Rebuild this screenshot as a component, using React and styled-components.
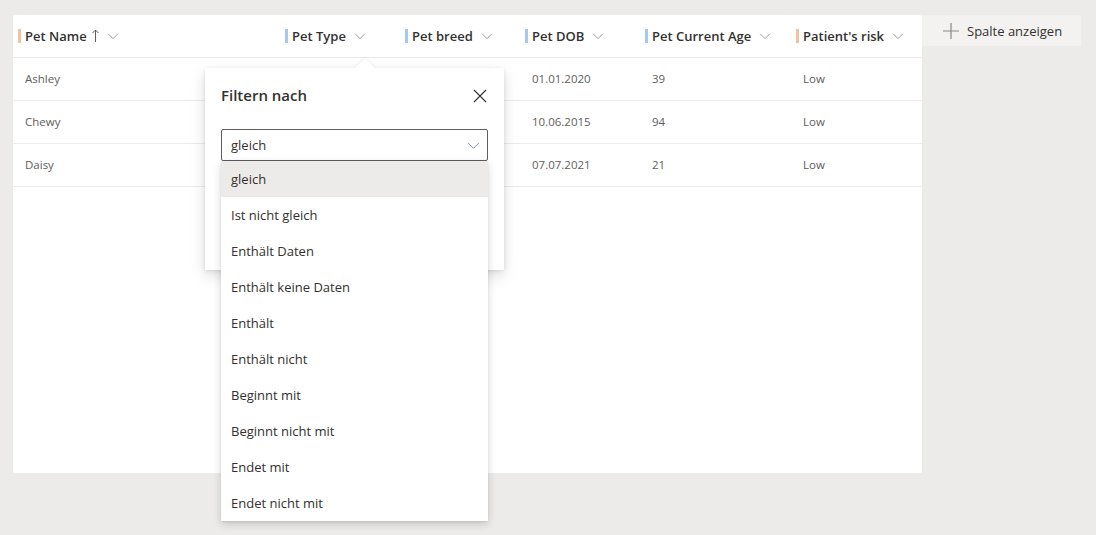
import React from 'react'
import styled, { createGlobalStyle } from 'styled-components'

const GlobalStyle = createGlobalStyle`
  html, body {
    margin: 0;
    padding: 0;
    background: #edebe9;
    font-family: 'Open Sans', 'Noto Sans', sans-serif;
  }
`

const columns = [
  { key: 'name', label: 'Pet Name', width: 267, accent: '#f2c19e', sorted: true },
  { key: 'type', label: 'Pet Type', width: 120, accent: '#a6c8ee' },
  { key: 'breed', label: 'Pet breed', width: 120, accent: '#a6c8ee' },
  { key: 'dob', label: 'Pet DOB', width: 120, accent: '#a6c8ee' },
  { key: 'age', label: 'Pet Current Age', width: 151, accent: '#a6c8ee' },
  { key: 'risk', label: "Patient's risk", width: 131, accent: '#f2c19e' },
]

const rows = [
  { name: 'Ashley', type: '', breed: '', dob: '01.01.2020', age: '39', risk: 'Low' },
  { name: 'Chewy', type: '', breed: '', dob: '10.06.2015', age: '94', risk: 'Low' },
  { name: 'Daisy', type: '', breed: '', dob: '07.07.2021', age: '21', risk: 'Low' },
]

const options = [
  'gleich',
  'Ist nicht gleich',
  'Enthält Daten',
  'Enthält keine Daten',
  'Enthält',
  'Enthält nicht',
  'Beginnt mit',
  'Beginnt nicht mit',
  'Endet mit',
  'Endet nicht mit',
]

const gridTemplate = columns.map((c) => `${c.width}px`).join(' ')

function Chevron({ size = 12, color = '#8a8886' }) {
  return (
    <svg width={size} height={size} viewBox="0 0 16 16" fill="none">
      <path d="M1.5 5l6.5 6.5L14.5 5" stroke={color} strokeWidth="1.1" />
    </svg>
  )
}

function App() {
  return (
    <Page>
      <GlobalStyle />
      <Card>
        <HeaderRow>
          {columns.map((col) => (
            <HeaderCell key={col.key}>
              <Accent color={col.accent} />
              <HeaderLabel>{col.label}</HeaderLabel>
              {col.sorted && (
                <SortArrow>
                  <svg width="7" height="13" viewBox="0 0 7 13" fill="none">
                    <path d="M3.5 1v12M0.5 4l3-3 3 3" stroke="#605e5c" strokeWidth="1" />
                  </svg>
                </SortArrow>
              )}
              <HeaderChevron>
                <Chevron />
              </HeaderChevron>
            </HeaderCell>
          ))}
        </HeaderRow>
        {rows.map((row) => (
          <Row key={row.name}>
            {columns.map((col) => (
              <Cell key={col.key}>{row[col.key]}</Cell>
            ))}
          </Row>
        ))}

        <Callout>
          <Beak />
          <CalloutHeader>
            <CalloutTitle>Filtern nach</CalloutTitle>
            <CloseButton aria-label="Schließen">
              <svg width="14" height="14" viewBox="0 0 14 14">
                <path d="M1 1l12 12M13 1L1 13" stroke="#323130" strokeWidth="1.1" />
              </svg>
            </CloseButton>
          </CalloutHeader>
          <Dropdown>
            <DropdownValue>gleich</DropdownValue>
            <Chevron size={13} color="#6f86a3" />
            <OptionList>
              {options.map((opt, i) => (
                <Option key={opt} selected={i === 0}>
                  {opt}
                </Option>
              ))}
            </OptionList>
          </Dropdown>
        </Callout>
      </Card>
      <AddColumnButton>
        <svg width="16" height="16" viewBox="0 0 16 16">
          <path d="M8 0v16M0 8h16" stroke="#8a8886" strokeWidth="1.2" />
        </svg>
        Spalte anzeigen
      </AddColumnButton>
    </Page>
  )
}

const Page = styled.div`
  display: flex;
  align-items: flex-start;
  padding: 15px 13px;
  min-height: 535px;
  box-sizing: border-box;
`

const Card = styled.div`
  position: relative;
  width: 909px;
  height: 458px;
  background: #ffffff;
  border-radius: 2px;
`

const HeaderRow = styled.div`
  display: grid;
  grid-template-columns: ${gridTemplate};
  height: 42px;
  border-bottom: 1px solid #edebe9;
`

const HeaderCell = styled.div`
  display: flex;
  align-items: center;
  padding-left: 5px;
  padding-bottom: 1px;
  font-size: 13px;
  font-weight: 600;
  color: #323130;
  white-space: nowrap;
`

const Accent = styled.span`
  display: inline-block;
  width: 3px;
  height: 14px;
  background: ${(p) => p.color};
  margin-right: 4px;
`

const HeaderLabel = styled.span``

const SortArrow = styled.span`
  display: inline-flex;
  margin-left: 5px;
`

const HeaderChevron = styled.span`
  display: inline-flex;
  margin-left: 8px;
`

const Row = styled.div`
  display: grid;
  grid-template-columns: ${gridTemplate};
  height: 42px;
  border-bottom: 1px solid #edebe9;
`

const Cell = styled.div`
  display: flex;
  align-items: center;
  padding-left: 12px;
  padding-bottom: 1px;
  font-size: 11.5px;
  color: #605e5c;
`

const Callout = styled.div`
  position: absolute;
  left: 192px;
  top: 53px;
  width: 299px;
  height: 202px;
  padding: 0 16px;
  box-sizing: border-box;
  background: #ffffff;
  box-shadow: 0 6px 14px rgba(0, 0, 0, 0.13), 0 1px 4px rgba(0, 0, 0, 0.1);
`

const Beak = styled.div`
  position: absolute;
  top: -7px;
  left: 153px;
  width: 14px;
  height: 14px;
  background: #ffffff;
  transform: rotate(45deg);
  box-shadow: -1px -1px 3px rgba(0, 0, 0, 0.06);
`

const CalloutHeader = styled.div`
  position: relative;
  display: flex;
  align-items: center;
  justify-content: space-between;
  height: 53px;
`

const CalloutTitle = styled.div`
  font-size: 15px;
  font-weight: 600;
  color: #323130;
`

const CloseButton = styled.span`
  display: inline-flex;
  margin-right: 1px;
  margin-top: 2px;
`

const Dropdown = styled.div`
  position: relative;
  display: flex;
  align-items: center;
  justify-content: space-between;
  height: 32px;
  margin-top: 8px;
  padding: 0 7px 0 9px;
  box-sizing: border-box;
  border: 1px solid #605e5c;
  border-radius: 2px;
`

const DropdownValue = styled.span`
  font-size: 13px;
  color: #323130;
`

const OptionList = styled.div`
  position: absolute;
  top: 31px;
  left: -1px;
  right: -1px;
  background: #ffffff;
  border-radius: 0 0 2px 2px;
  box-shadow: 0 3px 8px rgba(0, 0, 0, 0.16), 0 1px 2px rgba(0, 0, 0, 0.08);
  z-index: 2;
`

const Option = styled.div`
  display: flex;
  align-items: center;
  height: 36px;
  padding-left: 10px;
  font-size: 13px;
  color: #323130;
  background: ${(p) => (p.selected ? '#edebe9' : '#ffffff')};
`

const AddColumnButton = styled.div`
  display: flex;
  align-items: center;
  gap: 8px;
  width: 159px;
  height: 31px;
  padding-left: 21px;
  box-sizing: border-box;
  background: #f3f2f1;
  font-size: 13px;
  color: #323130;
`

export default App
